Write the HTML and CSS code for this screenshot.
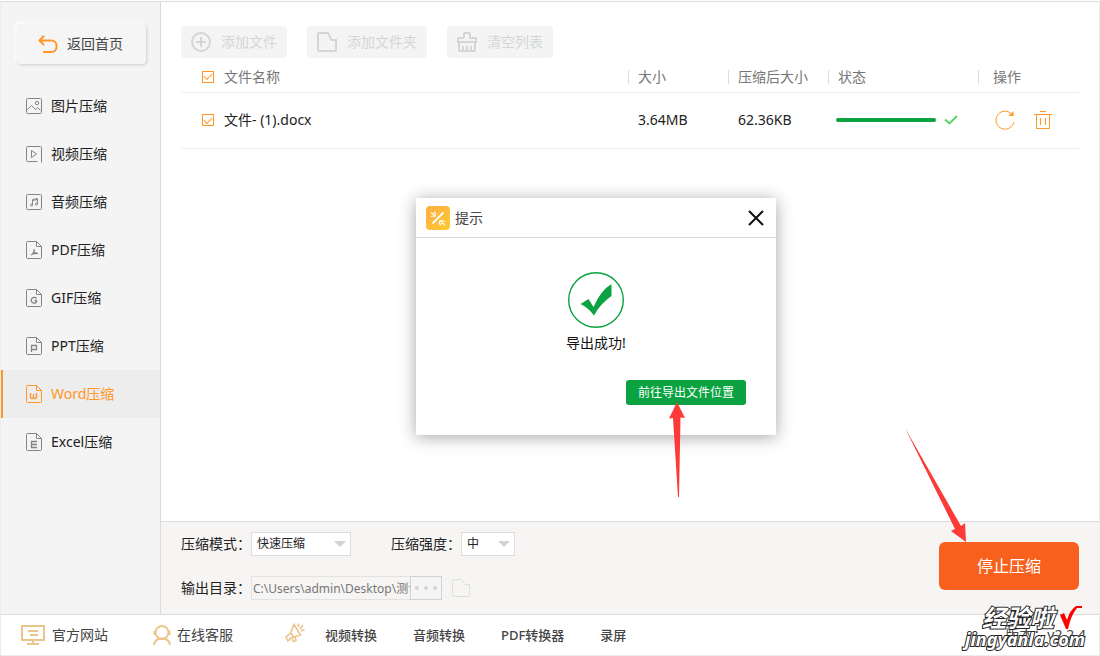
FILE: index.html
```html
<!DOCTYPE html>
<html lang="zh-CN">
<head>
<meta charset="utf-8">
<title>Word压缩</title>
<link rel="stylesheet" href="styles.css">
</head>
<body>
<div class="app">
  <div class="workspace">
    <aside class="sidebar">
      <button class="back" type="button">
        <svg width="20" height="18" viewBox="0 0 20 18" fill="none" stroke="currentColor" stroke-width="2"><path d="M6 0.8 1.5 5.5 6 10M2 5.5h11.5a5 5 0 0 1 5 5v1.5a5 5 0 0 1-5 5H5"/></svg>
        返回首页
      </button>
      <nav class="nav">
        <a class="nav-item" href="#"><svg class="nav-icon" viewBox="0 0 16 18"><rect x=".5" y="1.5" width="15" height="15" rx="1"/><circle cx="11" cy="6" r="1.7"/><path d="M1.5 12.5 5.5 8.5l4 4 2-2 3 3"/></svg>图片压缩</a>
        <a class="nav-item" href="#"><svg class="nav-icon" viewBox="0 0 16 18"><path d="M11.5 16.500H1.500a1 1 0 0 1-1-1V2.500a1 1 0 0 1 1-1h13a1 1 0 0 1 1 1v15M5.500 5.500v7L10.500 9z"/></svg>视频压缩</a>
        <a class="nav-item" href="#"><svg class="nav-icon" viewBox="0 0 16 18"><rect x=".5" y="1.500" width="15" height="15" rx="1"/><path d="M6.500 12V6.500l5-1V11M6.500 7.500l5-1"/><circle cx="5.500" cy="12" r="1"/><circle cx="10.500" cy="11" r="1"/></svg>音频压缩</a>
        <a class="nav-item" href="#"><svg class="nav-icon" viewBox="0 0 16 18"><path d="M10.500.5h-9a1 1 0 0 0-1 1v15a1 1 0 0 0 1 1h13a1 1 0 0 0 1-1v-11zM10.500.5v5h5"/><path class="glyph" d="M8 8v2.500q0 2-3 3.500M8 10.500q1 2 4 2M6 12.500h4"/></svg>PDF压缩</a>
        <a class="nav-item" href="#"><svg class="nav-icon" viewBox="0 0 16 18"><path d="M10.500.5h-9a1 1 0 0 0-1 1v15a1 1 0 0 0 1 1h13a1 1 0 0 0 1-1v-11zM10.500.5v5h5"/><path class="glyph" d="M10.500 9.500a3 2.800 0 1 0 0 3.500v-1.500h-2"/></svg>GIF压缩</a>
        <a class="nav-item" href="#"><svg class="nav-icon" viewBox="0 0 16 18"><path d="M10.500.5h-9a1 1 0 0 0-1 1v15a1 1 0 0 0 1 1h13a1 1 0 0 0 1-1v-11zM10.500.5v5h5"/><path class="glyph" d="M5.500 15V8.500h5v4h-5"/></svg>PPT压缩</a>
        <a class="nav-item active" href="#" aria-current="page"><svg class="nav-icon" viewBox="0 0 16 18"><path d="M10.500.5h-9a1 1 0 0 0-1 1v15a1 1 0 0 0 1 1h13a1 1 0 0 0 1-1v-11zM10.500.5v5h5"/><path class="glyph" d="M4.500 8v4.500l1 1h1l1-1V9M7.500 12.500l1 1h1l1-1V8"/></svg>Word压缩</a>
        <a class="nav-item" href="#"><svg class="nav-icon" viewBox="0 0 16 18"><path d="M10.500.5h-9a1 1 0 0 0-1 1v15a1 1 0 0 0 1 1h13a1 1 0 0 0 1-1v-11zM10.500.5v5h5"/><path class="glyph" d="M11 8.500H5.500v6H11M5.500 11.500H11"/></svg>Excel压缩</a>
      </nav>
    </aside>
    <div class="content">
      <main class="files">
        <div class="toolbar">
          <button class="tool" type="button" disabled><svg width="20" height="20" viewBox="0 0 20 20"><circle cx="10" cy="10" r="9"/><path d="M10 5v10M5 10h10"/></svg>添加文件</button>
          <button class="tool" type="button" disabled><svg width="20" height="20" viewBox="0 0 20 20"><path d="M1 2v16q0 1 1 1h16q1 0 1-1V8h-4q-1 0-1-1L11 1H2q-1 0-1 1z"/></svg>添加文件夹</button>
          <button class="tool" type="button" disabled><svg width="20" height="20" viewBox="0 0 20 20"><path d="M7 6V2q0-1 1-1h4q1 0 1 1v4h5q1 0 1 1v3H1V7q0-1 1-1h5M2 10v8q0 1 1 1h14q1 0 1-1v-8M6 14v5M10 14v5M14 14v5"/></svg>清空列表</button>
        </div>
        <table class="table">
          <colgroup><col><col class="w-size"><col class="w-size"><col class="w-state"><col class="w-ops"></colgroup>
          <thead>
            <tr>
              <th><label class="name"><input class="check" type="checkbox" checked>文件名称</label></th>
              <th><span class="sep">大小</span></th>
              <th><span class="sep">压缩后大小</span></th>
              <th><span class="sep">状态</span></th>
              <th><span class="sep sep-wide">操作</span></th>
            </tr>
          </thead>
          <tbody>
            <tr>
              <td><label class="name"><input class="check" type="checkbox" checked>文件- (1).docx</label></td>
              <td class="value">3.64MB</td>
              <td class="value">62.36KB</td>
              <td><div class="state"><div class="bar" role="progressbar" aria-label="状态" aria-valuenow="100"></div><svg width="14" height="10" viewBox="0 0 14 10" fill="none" stroke="#5ad567" stroke-width="2"><path d="M1 4.500 5.500 8.500 13 1"/></svg></div></td>
              <td><div class="ops">
                <button class="op" type="button" aria-label="重试"><svg width="20" height="20" viewBox="0 0 20 20"><path d="M17 4.500A9 9 0 1 0 18.800 12"/><path class="solid" d="M18.500 1v5h-5z"/></svg></button>
                <button class="op" type="button" aria-label="删除"><svg width="18" height="20" viewBox="0 0 18 20"><path d="M6 1.500h6M0 4.500h18M2.500 4.500v14h13v-14M6.500 8v7M11.500 8v7"/></svg></button>
              </div></td>
            </tr>
          </tbody>
        </table>
      </main>
      <section class="settings">
        <form class="form">
          <div class="line">
            <label class="caption" for="mode">压缩模式：</label>
            <span class="select select-mode"><select id="mode"><option>快速压缩</option></select></span>
            <label class="caption caption-next" for="level">压缩强度：</label>
            <span class="select select-level"><select id="level"><option>中</option></select></span>
          </div>
          <div class="line">
            <label class="caption" for="path">输出目录：</label>
            <input class="path" id="path" type="text" value="C:\Users\admin\Desktop\测试" readonly>
            <button class="browse" type="button" aria-label="浏览"><i></i><i></i><i></i></button>
            <button class="folder" type="button" aria-label="打开目录"><svg width="18" height="18" viewBox="0 0 18 18"><path d="M.5 1.500v15q0 1 1 1h15q1 0 1-1v-11h-4q-1 0-1-1L9.500.5h-8q-1 0-1 1z"/></svg></button>
          </div>
        </form>
        <button class="stop" type="button">停止压缩</button>
      </section>
    </div>
  </div>
  <footer class="footer">
    <a class="service" href="#"><svg width="24" height="20" viewBox="0 0 24 20"><path d="M1 1h22v14H1zM7 6h10M9 10h8M12 15v4M6 19h12"/></svg>官方网站</a>
    <a class="service service-chat" href="#"><svg width="18" height="20" viewBox="0 0 18 20"><path d="M1 20q1-6.500 8-6.500T17 20"/><circle cx="9" cy="7.500" r="6.500"/><path d="M1.500 6v4M16.500 6v4"/></svg>在线客服</a>
    <svg class="horn" width="20" height="20" viewBox="0 0 20 20"><path d="M9 1.500 15.500 12 6 15 3 18 1 14 5.500 10zM5.500 9.500l3.500 5M7 16l1.500 2.500 2.500-1-1-3M13.500 4V.5M15 6l3-4M16 8l3.500-1.500"/></svg>
    <nav class="links"><a href="#">视频转换</a><a href="#">音频转换</a><a href="#">PDF转换器</a><a href="#">录屏</a></nav>
    <span class="version">版本：v2.2.4</span>
  </footer>
  <section class="dialog" role="dialog" aria-labelledby="tip">
    <header class="dialog-head">
      <svg width="24" height="24" viewBox="0 0 24 24"><defs><linearGradient id="g" x2="1" y2="1"><stop stop-color="#ffae42"/><stop offset="1" stop-color="#ffca32"/></linearGradient></defs><rect width="24" height="24" rx="4" fill="url(#g)"/><path d="M6.500 17.500 17.500 6.500" stroke="#fff" stroke-width="1.800"/><path d="M5 6.500l3 2M8.500 5.500l1 2.500-1 3M5 10.500l4-1M18.500 15.500q-4-2-5 .5-.5 3 2 3M15.500 15.500v2h2l1.500 2" stroke="#fff" stroke-width="1.200" fill="none"/></svg>
      <h2 class="dialog-title" id="tip">提示</h2>
      <button class="close" type="button" aria-label="关闭"><svg width="16" height="16" viewBox="0 0 16 16"><path d="M1 1l14 14M15 1 1 15" stroke="#111" stroke-width="2"/></svg></button>
    </header>
    <div class="dialog-body">
      <svg width="56" height="56" viewBox="0 0 56 56"><circle cx="28" cy="28" r="27.300" fill="none" stroke="#0ba341" stroke-width="1.400"/><path d="M12.500 32 20.500 27 25.500 35Q33 18 43.500 12V24Q32 32 26 43.500 20 35.500 12.500 32z" fill="#0ba341"/></svg>
      <p class="message">导出成功!</p>
    </div>
    <button class="goto" type="button">前往导出文件位置</button>
  </section>
  <svg class="arrow arrow-up" width="16" height="96" viewBox="0 0 16 96"><path d="M8 0 16 16 11.500 15.500 10 95H9L4 16 0 16.500z"/></svg>
  <svg class="arrow arrow-down" width="62" height="114" viewBox="0 0 62 114"><path d="M0 0 56 98 60 95 61 114 46 103 50 101z"/></svg>
  <div class="mark">
    <div class="mark-top"><span>经验啦</span><svg width="24" height="24" viewBox="0 0 24 24"><path d="M1 9 5 7 8 14Q11 4 17 0h6v2h-5Q12 9 9 23H7z" fill="#f00"/></svg></div>
    <div class="mark-url">jingyanla.com</div>
  </div>
</div>
</body>
</html>
```
FILE: styles.css
```css
* { box-sizing: border-box; }
body {
  margin: 0;
  padding-top: 1px;
  height: 100vh;
  background: #fff;
  color: #222;
  font: 14px/20px "Noto Sans", "Noto Sans CJK SC", sans-serif;
}
button, input, select { font: inherit; color: inherit; }
button { border: 0; padding: 0; background: none; }
a { color: inherit; text-decoration: none; }
svg { display: block; flex: none; }
.app {
  position: relative;
  height: 100%;
  display: flex;
  flex-direction: column;
  overflow: hidden;
  border: 1px solid #ececec;
  border-top-color: #dcdcdc;
}
.workspace { flex: 1; display: flex; min-height: 0; }

.sidebar {
  flex: none;
  width: 160px;
  padding-top: 22px;
  background: #f4f4f4;
  border-right: 1px solid #dadada;
}
.back {
  display: flex;
  align-items: center;
  gap: 9px;
  width: 129px;
  height: 40px;
  margin: 0 0 18px 16px;
  padding-left: 21px;
  border-radius: 4px;
  background: #f5f5f5;
  color: #444;
  box-shadow: 1px 1px 3px #ccc, -2px -2px 3px #fff;
}
.back svg { color: #ff9628; }
.nav-item {
  display: flex;
  align-items: center;
  gap: 9px;
  height: 48px;
  padding-left: 23px;
  border-left: 2px solid transparent;
}
.nav-item.active { color: #ff9628; background: #ededed; border-left-color: #ff9628; }
.nav-icon { width: 16px; height: 18px; fill: none; stroke: #858585; }
.active .nav-icon { stroke: currentColor; }
.glyph { stroke-width: 1.3; }

.content { flex: 1; min-width: 0; display: flex; flex-direction: column; }
.files { flex: 1; padding: 24px 20px 0; }
.toolbar { display: flex; gap: 20px; margin-bottom: 4px; }
.tool {
  display: flex;
  align-items: center;
  gap: 10px;
  height: 32px;
  padding: 0 10px;
  border-radius: 4px;
  background: #f4f4f4;
  color: #d3d6d9;
}
.tool svg { fill: none; stroke: #d3d6d9; stroke-width: 2; }

.table { width: 100%; table-layout: fixed; border-collapse: collapse; }
.w-size { width: 100px; }
.w-state { width: 150px; }
.w-ops { width: 101px; }
.table th, .table td { padding: 0; text-align: left; font-weight: 400; border-bottom: 1px solid #ececec; }
.table th { height: 30px; color: #777; }
.table td { height: 56px; }
.name { display: flex; align-items: center; gap: 10px; padding-left: 21px; }
.check {
  appearance: none;
  display: grid;
  place-items: center;
  width: 12px;
  height: 12px;
  margin: 0;
  border: 1px solid #ff9628;
}
.check::after {
  content: "";
  width: 7px;
  height: 4px;
  margin-bottom: 2px;
  border: solid #ff9628;
  border-width: 0 0 1px 1px;
  transform: rotate(-45deg);
}
.sep { display: block; height: 14px; line-height: 14px; padding-left: 9px; border-left: 1px solid #ddd; }
.sep-wide { padding-left: 14px; }
.table .value { padding-left: 10px; }
.state { display: flex; align-items: center; gap: 8px; padding-left: 8px; }
.bar { width: 100px; height: 4px; border-radius: 2px; background: #0ba341; }
.ops { display: flex; gap: 19px; padding-left: 17px; }
.op svg { fill: none; stroke: #ff9628; }
.op .solid { fill: #ff9628; stroke: none; }

.settings {
  display: flex;
  justify-content: space-between;
  padding: 10px 20px 14px;
  background: #f6f5f3;
  border-top: 1px solid #dcdcdc;
}
.form { display: flex; flex-direction: column; gap: 20px; }
.line { display: flex; align-items: center; height: 24px; }
.caption { width: 70px; white-space: nowrap; }
.caption-next { margin-left: 40px; }
.select { position: relative; height: 24px; }
.select-mode { width: 100px; }
.select-level { width: 54px; }
.select select {
  appearance: none;
  width: 100%;
  height: 24px;
  padding: 0 5px;
  border: 1px solid #dcdcdc;
  border-radius: 0;
  background: #fff;
  font-size: 12px;
}
.select::after {
  content: "";
  position: absolute;
  right: 5px;
  top: 9px;
  border: 6px solid transparent;
  border-top-color: #d0d3d6;
  border-bottom: 0;
}
.path {
  width: 159px;
  height: 24px;
  padding: 0 0 0 1px;
  border: 1px solid #e2e2e2;
  border-right: 0;
  background: transparent;
  color: #777;
  font-size: 12px;
}
.browse {
  display: flex;
  align-items: center;
  justify-content: center;
  gap: 5px;
  width: 32px;
  height: 24px;
  border: 1px solid #d0d3d6;
}
.browse i { width: 4px; height: 4px; border-radius: 50%; background: #d0d3d6; }
.folder { margin-left: 10px; }
.folder svg { fill: none; stroke: #dedede; }
.stop {
  width: 140px;
  height: 48px;
  margin-top: 10px;
  border-radius: 6px;
  background: #f8601d;
  color: #fff;
  font-size: 16px;
}

.footer {
  flex: none;
  display: flex;
  align-items: center;
  height: 41px;
  padding: 0 13px 0 20px;
  border-top: 1px solid #dcdcdc;
  color: #444;
}
.service { display: flex; align-items: center; gap: 7px; }
.service-chat { margin-left: 45px; gap: 6px; }
.service svg, .horn { fill: none; stroke: #ebc48c; stroke-width: 2; }
.horn { margin: -4px 20px 0 52px; stroke-width: 1.6; }
.links { display: flex; gap: 36px; font-size: 13px; font-weight: 500; color: #444; }
.version { margin-left: auto; }

.dialog {
  position: absolute;
  left: 415px;
  top: 196px;
  width: 360px;
  height: 237px;
  background: #fff;
  box-shadow: 0 2px 16px #0000005a;
}
.dialog-head {
  display: flex;
  align-items: center;
  gap: 5px;
  height: 40px;
  padding: 0 12px 0 10px;
  border-bottom: 1px solid #d9d9d9;
}
.dialog-title { margin: 0; font-size: 14px; font-weight: 400; color: #444; }
.close { margin-left: auto; }
.dialog-body { display: flex; flex-direction: column; align-items: center; padding-top: 34px; }
.message { margin: 5px 0 27px; color: #111; }
.goto {
  display: block;
  width: 120px;
  height: 25px;
  margin-left: auto;
  margin-right: 30px;
  border-radius: 3px;
  background: #0ba341;
  color: #fff;
  font-size: 12px;
}
.arrow { position: absolute; fill: #fc3a38; }
.arrow-up { left: 668px; top: 400px; }
.arrow-down { left: 904px; top: 426px; }

.mark {
  position: absolute;
  right: 14px;
  bottom: 7px;
  color: #fff;
  font-weight: 700;
  -webkit-text-stroke: 2px #222;
  paint-order: stroke fill;
}
.mark-top { display: flex; align-items: center; gap: 5px; padding-left: 17px; font-size: 24px; line-height: 25px; font-style: italic; }
.mark-url { font-size: 18px; line-height: 18px; font-style: italic; }
```
